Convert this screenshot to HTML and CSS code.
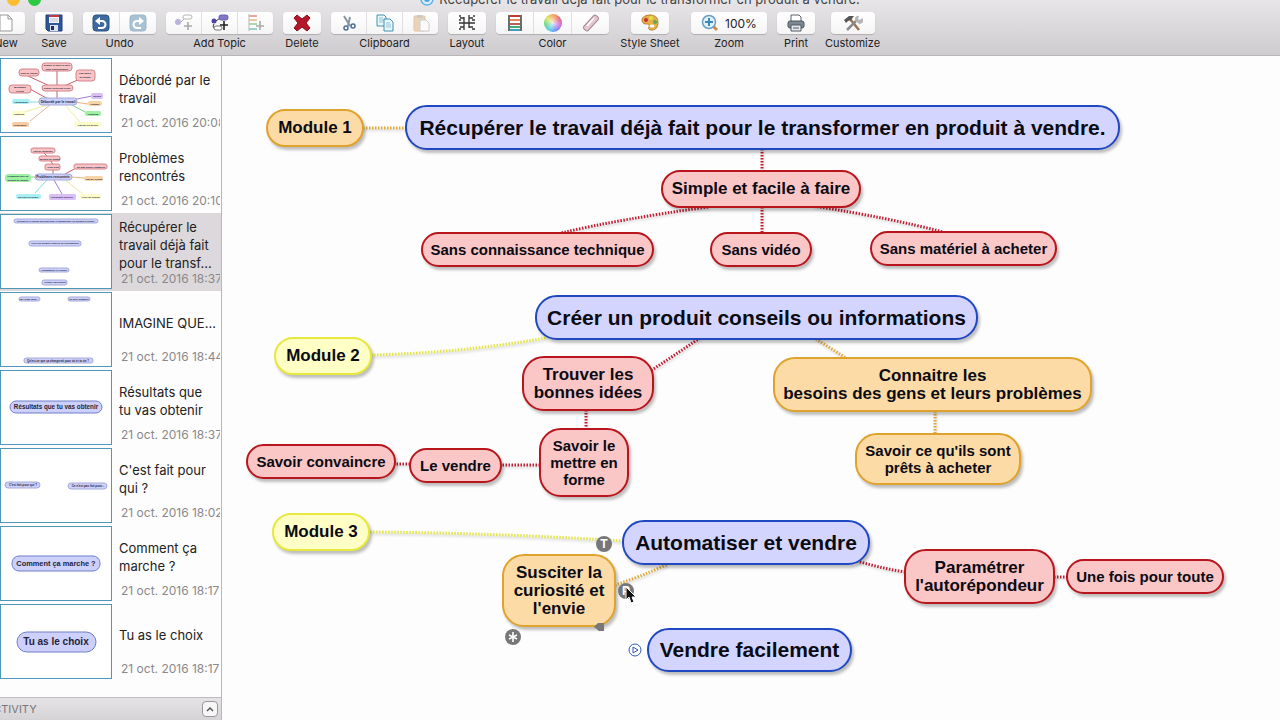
FILE: index.html
```html
<!DOCTYPE html>
<html lang="fr">
<head>
    <meta charset="UTF-8">
    <meta name="viewport" content="width=device-width, initial-scale=1.0">
    <title>Récupérer le travail déjà fait pour le transformer en produit à vendre.</title>
    <link rel="stylesheet" href="styles.css">
</head>
<body>
    <header class="window-header">
        <div class="titlebar">
            <div class="lights">
                <span class="light red"></span>
                <span class="light yellow"></span>
                <span class="light green"></span>
            </div>
            <svg class="doc-icon" width="14" height="14" viewBox="0 0 14 14"><circle cx="7" cy="7" r="6" fill="#d8eefc" stroke="#5fb3e6" stroke-width="1.5"/><circle cx="7" cy="7" r="3" fill="#4ba3e0"/></svg>
            <span>Récupérer le travail déjà fait pour le transformer en produit à vendre.</span>
        </div>

        <div class="toolbar">
            <div class="tool">
                <div class="group">
                    <button type="button" aria-label="New"><svg width="18" height="18" viewBox="0 0 18 18"><path d="M3 1h8l4 4v12H3z" fill="#fff" stroke="#999" stroke-width="1"/><path d="M11 1v4h4" fill="none" stroke="#999"/></svg></button>
                </div>
                <span class="label">New</span>
            </div>
            <div class="tool">
                <div class="group">
                    <button type="button" aria-label="Save"><svg width="18" height="18" viewBox="0 0 18 18"><path d="M1 1h16v16H3l-2-2z" fill="#2f569c" stroke="#1f3d78" stroke-width="1"/><rect x="4" y="1" width="10" height="8" fill="#f3f5fa"/><rect x="4" y="1" width="10" height="2" fill="#c23a43"/><path d="M5 5h8M5 7h8" stroke="#b9c2d6"/><rect x="5" y="11" width="8" height="6" fill="#dde3ee"/><rect x="6" y="12" width="3" height="4" fill="#1d2f58"/></svg></button>
                </div>
                <span class="label">Save</span>
            </div>
            <div class="tool">
                <div class="group group-two">
                    <button type="button" aria-label="Undo"><svg width="18" height="18" viewBox="0 0 18 18"><rect x="1" y="1" width="16" height="16" rx="3" fill="#3d699f" stroke="#2d5282"/><path d="M5 7h5a3 3 0 0 1 0 7H6" fill="none" stroke="#fff" stroke-width="2"/><path d="M3 7l5-4v8z" fill="#fff"/></svg></button>
                    <button type="button" aria-label="Redo"><svg width="18" height="18" viewBox="0 0 18 18"><rect x="1" y="1" width="16" height="16" rx="3" fill="#a9c2d3" stroke="#9bb7c9"/><path d="M13 7H8a3 3 0 0 0 0 7h4" fill="none" stroke="#fff" stroke-width="2"/><path d="M15 7l-5-4v8z" fill="#fff"/></svg></button>
                </div>
                <span class="label">Undo</span>
            </div>
            <div class="tool">
                <div class="group group-three">
                    <button type="button" aria-label="Add topic"><svg width="18" height="18" viewBox="0 0 18 18"><circle cx="3" cy="8" r="3" fill="#b9b3d8"/><path d="M6 8l3-3" stroke="#aaa"/><rect x="8" y="1" width="9" height="4" rx="2" fill="#fff" stroke="#b5b5b5"/><path d="M13 8v8M9 12h8" stroke="#aaa" stroke-width="1.6"/></svg></button>
                    <button type="button" aria-label="Add subtopic"><svg width="18" height="18" viewBox="0 0 18 18"><circle cx="3" cy="7" r="2.5" fill="#4d45a5"/><path d="M5 7l4-3M3 10c-2 3 0 5 3 5" stroke="#333" fill="none"/><rect x="8" y="1" width="9" height="5" rx="2" fill="#8077c7" stroke="#6860b4"/><rect x="3" y="12" width="8" height="4" rx="2" fill="#fff" stroke="#777"/><path d="M13 7v9M9 11h8" stroke="#222" stroke-width="1.6"/></svg></button>
                    <button type="button" aria-label="Add multiple topics"><svg width="18" height="18" viewBox="0 0 18 18"><path d="M2 2h8" stroke="#e8a59a" stroke-width="2"/><path d="M2 6h8" stroke="#e8c9a0" stroke-width="2"/><path d="M2 10h8" stroke="#a9d9ae" stroke-width="2"/><path d="M2 15h8" stroke="#9bcfd0" stroke-width="2"/><path d="M2 0v17" stroke="#b9b9b9"/><path d="M13 7v9M9 12h8" stroke="#aaa" stroke-width="1.6"/></svg></button>
                </div>
                <span class="label">Add Topic</span>
            </div>
            <div class="tool">
                <div class="group">
                    <button type="button" aria-label="Delete"><svg width="18" height="18" viewBox="0 0 18 18"><path d="M4 1l5 4 5-4 3 3-4 5 4 5-3 3-5-4-5 4-3-3 4-5-4-5z" fill="#b5162a" stroke="#8c0f1f" stroke-width="1"/></svg></button>
                </div>
                <span class="label">Delete</span>
            </div>
            <div class="tool">
                <div class="group group-three">
                    <button type="button" aria-label="Cut"><svg width="18" height="18" viewBox="0 0 18 18"><path d="M4 2l6 10M10 3l-2 9" stroke="#8796a5" stroke-width="2"/><circle cx="6" cy="14" r="2" fill="none" stroke="#4a6f94" stroke-width="1.5"/><circle cx="13" cy="12" r="2" fill="none" stroke="#4a6f94" stroke-width="1.5"/></svg></button>
                    <button type="button" aria-label="Copy"><svg width="18" height="18" viewBox="0 0 18 18"><path d="M1 1h7l2 2v9H1z" fill="#eaf6fa" stroke="#3f92ab"/><path d="M3 4h4M3 6h5M3 8h4" stroke="#8fc3d2"/><path d="M8 5h6l3 3v9H8z" fill="#eaf6fa" stroke="#3f92ab"/><path d="M10 9h4M10 11h5M10 13h5" stroke="#8fc3d2"/></svg></button>
                    <button type="button" aria-label="Paste"><svg width="18" height="18" viewBox="0 0 18 18"><rect x="2" y="2" width="11" height="15" rx="1" fill="#ead3bb" stroke="#dec4a8"/><rect x="5" y="1" width="5" height="3" fill="#c9c9c9"/><path d="M8 6h6l3 3v8H8z" fill="#fafafa" stroke="#ccc"/></svg></button>
                </div>
                <span class="label">Clipboard</span>
            </div>
            <div class="tool">
                <div class="group">
                    <button type="button" aria-label="Layout"><svg width="18" height="18" viewBox="0 0 18 18"><path d="M6 3v13M11 1v13M1 9h16M2 4h4M2 13h4M11 4h4M11 13h4M1 2h2M1 6h2M15 2h2M14 6h3M1 15h2M14 15h3" stroke="#333" stroke-width="1.3" fill="none"/></svg></button>
                </div>
                <span class="label">Layout</span>
            </div>
            <div class="tool">
                <div class="group group-color">
                    <button type="button" aria-label="Color list"><svg width="18" height="18" viewBox="0 0 18 18"><path d="M4 2h10" stroke="#c0392b" stroke-width="2"/><path d="M4 6h10" stroke="#e08a5a" stroke-width="2"/><path d="M4 10h10" stroke="#b5625f" stroke-width="2"/><path d="M4 13h10" stroke="#40ae79" stroke-width="2"/><path d="M4 16h10" stroke="#409fc0" stroke-width="2"/><path d="M3 1v16M15 1v16" stroke="#222" stroke-width="1.3"/></svg></button>
                    <button type="button" aria-label="Color wheel"><span class="wheel"></span></button>
                    <button type="button" aria-label="Clear color"><svg width="18" height="18" viewBox="0 0 18 18"><rect x="6" y="0" width="6" height="18" rx="2" transform="rotate(42 9 9)" fill="#e8c5d2" stroke="#9b8790"/><path d="M5 12L12 4" stroke="#fff" stroke-width="1.5"/></svg></button>
                </div>
                <span class="label">Color</span>
            </div>
            <div class="tool tool-wide">
                <div class="group">
                    <button type="button" aria-label="Style Sheet"><svg width="18" height="18" viewBox="0 0 18 18"><path d="M1 6c0-3 4-5 8-5 5 0 8 3 8 7 0 5-2 8-6 8-3 0-4-1-3-3 1-3-1-3-3-3-3 0-4-2-4-4z" fill="#e5b04a" stroke="#b8802c"/><circle cx="5" cy="6" r="2" fill="#c4312e"/><circle cx="10" cy="4" r="2" fill="#e6df4d"/><circle cx="14" cy="8" r="2" fill="#63a954"/><ellipse cx="11" cy="12" rx="2.5" ry="1.5" fill="#fff"/></svg></button>
                </div>
                <span class="label">Style Sheet</span>
            </div>
            <div class="tool">
                <div class="group group-zoom">
                    <button type="button"><svg width="18" height="18" viewBox="0 0 18 18"><path d="M12 12l4 4" stroke="#cf8c45" stroke-width="3"/><circle cx="8" cy="8" r="6.5" fill="#e1f1fb" stroke="#6c9ec2" stroke-width="1.5"/><path d="M8 4v8M4 8h8" stroke="#3c87bd" stroke-width="2"/></svg>100%</button>
                </div>
                <span class="label">Zoom</span>
            </div>
            <div class="tool">
                <div class="group">
                    <button type="button" aria-label="Print"><svg width="18" height="18" viewBox="0 0 18 18"><path d="M4 7V1h8l2 2v4" fill="#fff" stroke="#59636c"/><rect x="1" y="7" width="16" height="7" rx="2" fill="#7c8893" stroke="#4d565e"/><path d="M4 11h10v6H4z" fill="#e6eaee" stroke="#4d565e"/><path d="M6 14h6" stroke="#4d565e"/></svg></button>
                </div>
                <span class="label">Print</span>
            </div>
            <div class="tool">
                <div class="group group-wide">
                    <button type="button" aria-label="Customize"><svg width="20" height="18" viewBox="0 0 20 18"><path d="M7 5l9 11" stroke="#9a7452" stroke-width="2.5"/><path d="M1 6l5-4h5L8 6l-3 1-2 2z" fill="#555"/><path d="M4 16l9-9" stroke="#8c8c8c" stroke-width="2.5"/><path d="M13 7a3 3 0 0 1 3-5l-1 3 2 1 2-2a3 3 0 0 1-4 5z" fill="#b5b5b5"/></svg></button>
                </div>
                <span class="label">Customize</span>
            </div>
        </div>
    </header>

    <div class="workspace">
        <aside class="sidebar">
            <ul class="sheets">
                <li class="sheet">
                    <svg class="thumb" viewBox="1 1 110 73">
                        <g fill="none" stroke="#c4606c">
                            <path d="M57 12v34M28 18l24 11M82 20L62 29M30 31l20 11"/>
                            <path d="M72 42l20-4" stroke="#a87ed0"/><path d="M74 44l14 2" stroke="#e3b577"/><path d="M70 46l17 9" stroke="#7ddc83"/><path d="M65 47l15 17" stroke="#efeb9c"/><path d="M42 44H30" stroke="#84d7e0"/><path d="M47 47L24 54" stroke="#efeb9c"/><path d="M50 47L30 63" stroke="#e3b99a"/>
                        </g>
                        <g class="t-red"><rect x="42" y="5" width="30" height="8" rx="3"/><rect x="19" y="11" width="20" height="7" rx="3"/><rect x="76" y="12" width="19" height="11" rx="3"/><rect x="9" y="27" width="22" height="8" rx="3"/><rect x="42" y="27" width="31" height="6" rx="3"/></g>
                        <rect class="t-blue" x="39" y="40" width="38" height="7" rx="3"/>
                        <rect x="91" y="35" width="12" height="6" rx="2" fill="#d9bdf5"/><rect x="88" y="43" width="14" height="5" rx="2" fill="#f7d5a9"/><rect x="85" y="53" width="16" height="5" rx="2" fill="#a0f0a3"/><rect x="74" y="64" width="28" height="5" rx="2" fill="#fdfbc9"/><rect x="12" y="41" width="18" height="5" rx="2" fill="#a9eff4"/><rect x="12" y="53" width="14" height="5" rx="2" fill="#fdfbc9"/><rect x="12" y="64" width="17" height="5" rx="2" fill="#f9cba2"/>
                        <g class="t-text" font-size="2.5"><text x="57" y="8">Simple et facile à faire</text><text x="57" y="12">sans connaissance</text><text x="29" y="16">Trop de travail</text><text x="85" y="16">Pas assez</text><text x="85" y="20">de temps</text><text x="20" y="30">Messages</text><text x="20" y="34">clients</text><text x="57" y="31">Travail récurrent client</text><text x="58" y="45" font-size="3.4">Débordé par le travail</text><text x="97" y="39">Stress</text><text x="95" y="47">Fatigue</text><text x="93" y="57">Planning</text><text x="88" y="68">Pas de vie privée</text><text x="21" y="45">Facturation</text><text x="19" y="57">Factures</text><text x="20" y="68">Problèmes</text></g>
                    </svg>
                    <div class="info"><a class="name" href="#">Débordé par le travail</a><span class="date">21 oct. 2016 20:08</span></div>
                </li>
                <li class="sheet">
                    <svg class="thumb" viewBox="1 1 110 73">
                        <g fill="none" stroke="#c4606c"><path d="M44 17l4 4M50 24l4 6M53 33v5M65 38l13-7"/><path d="M30 41h6" stroke="#7ddc83"/><path d="M70 41l14 1" stroke="#e3b577"/><path d="M47 44L35 57" stroke="#84d7e0"/><path d="M54 44l8 14" stroke="#a87ed0"/><path d="M65 44l18 14" stroke="#efeb9c"/></g>
                        <g class="t-red"><rect x="31" y="12" width="24" height="5" rx="2"/><rect x="39" y="20" width="21" height="5" rx="2"/><rect x="45" y="28" width="15" height="6" rx="2"/><rect x="74" y="28" width="33" height="5" rx="2"/></g>
                        <rect class="t-blue" x="35" y="38" width="37" height="6" rx="3"/>
                        <rect x="5" y="38" width="26" height="8" rx="3" fill="#a0f0a3"/><rect x="84" y="40" width="19" height="5" rx="2" fill="#f7d5a9"/><rect x="16" y="58" width="25" height="5" rx="2" fill="#a9eff4"/><rect x="49" y="58" width="27" height="6" rx="2" fill="#d9bdf5"/><rect x="80" y="58" width="21" height="5" rx="2" fill="#fdfbc9"/>
                        <g class="t-text" font-size="2.5"><text x="43" y="16">Pas de méthode</text><text x="50" y="24">Besoin de temps</text><text x="53" y="32">Trop long</text><text x="91" y="32">Ne pas savoir comment</text><text x="53" y="42" font-size="3.2">Problèmes rencontrés</text><text x="18" y="41">Comment faire un</text><text x="18" y="45">produit de qualité</text><text x="94" y="44">Pas de clients</text><text x="28" y="62" font-size="2">Pas d'idée de produit</text><text x="62" y="62">Technique difficile</text><text x="91" y="62">Peur de vendre</text></g>
                    </svg>
                    <div class="info"><a class="name" href="#">Problèmes rencontrés</a><span class="date">21 oct. 2016 20:10</span></div>
                </li>
                <li class="sheet selected">
                    <svg class="thumb" viewBox="1 1 110 73">
                        <g class="t-blue"><rect x="14" y="5" width="84" height="4" rx="2"/><rect x="29" y="27" width="52" height="5" rx="2"/><rect x="39" y="54" width="30" height="4" rx="2"/><rect x="42" y="66" width="25" height="5" rx="2"/></g>
                        <g class="t-text" font-size="2.5"><text x="56" y="8" font-size="2.4">Récupérer le travail déjà fait pour le transformer en produit à vendre.</text><text x="55" y="30" font-size="2.4">Créer un produit conseils ou informations</text><text x="54" y="57">Automatiser et vendre</text><text x="55" y="69">Vendre facilement</text></g>
                    </svg>
                    <div class="info"><a class="name" href="#">Récupérer le travail déjà fait pour le transf...</a><span class="date">21 oct. 2016 18:37</span></div>
                </li>
                <li class="sheet">
                    <svg class="thumb" viewBox="1 1 110 73">
                        <g class="t-blue"><rect x="19" y="5" width="21" height="4" rx="2"/><rect x="68" y="5" width="22" height="4" rx="2"/><rect x="24" y="66" width="69" height="5" rx="2"/></g>
                        <g class="t-text" font-size="2.5"><text x="29" y="8">IMAGINE QUE...</text><text x="79" y="8">Tu sois organisé</text><text x="58" y="70" font-size="2.8">Qu'est-ce que ça changerait pour toi et ta vie ?</text></g>
                    </svg>
                    <div class="info"><a class="name" href="#">IMAGINE QUE...</a><span class="date">21 oct. 2016 18:44</span></div>
                </li>
                <li class="sheet">
                    <svg class="thumb" viewBox="1 1 110 73">
                        <rect class="t-blue t-strong" x="10" y="31" width="92" height="12" rx="6"/>
                        <text class="t-text" x="56" y="39" font-size="6.3">Résultats que tu vas obtenir</text>
                    </svg>
                    <div class="info"><a class="name" href="#">Résultats que tu&nbsp;vas obtenir</a><span class="date">21 oct. 2016 18:37</span></div>
                </li>
                <li class="sheet">
                    <svg class="thumb" viewBox="1 1 110 73">
                        <g class="t-blue"><rect x="5" y="34" width="35" height="6" rx="3"/><rect x="68" y="35" width="39" height="6" rx="3"/></g>
                        <g class="t-text" font-size="3"><text x="23" y="38">C'est fait pour qui ?</text><text x="88" y="39">Ce n'est pas fait pour...</text></g>
                    </svg>
                    <div class="info"><a class="name" href="#">C'est fait pour qui ?</a><span class="date">21 oct. 2016 18:02</span></div>
                </li>
                <li class="sheet">
                    <svg class="thumb" viewBox="1 1 110 73">
                        <rect class="t-blue t-strong" x="12" y="30" width="88" height="15" rx="7"/>
                        <text class="t-text" x="56" y="40" font-size="7.4">Comment ça marche ?</text>
                    </svg>
                    <div class="info"><a class="name" href="#">Comment ça marche ?</a><span class="date">21 oct. 2016 18:17</span></div>
                </li>
                <li class="sheet">
                    <svg class="thumb" viewBox="1 1 110 73">
                        <rect class="t-blue t-strong" x="17" y="28" width="79" height="20" rx="10"/>
                        <text class="t-text" x="56" y="41" font-size="10">Tu as le choix</text>
                    </svg>
                    <div class="info"><a class="name" href="#">Tu as le choix</a><span class="date">21 oct. 2016 18:17</span></div>
                </li>
            </ul>
            <div class="activity">
                <span>ACTIVITY</span>
                <button type="button" aria-label="Show activity"><svg width="8" height="6" viewBox="0 0 8 6"><path d="M1 5l3-3 3 3" fill="none" stroke="#555" stroke-width="1.5"/></svg></button>
            </div>
        </aside>

        <main class="map">
            <svg class="links" width="1058" height="664" viewBox="222 56 1058 664">
                <g class="l-orange">
                    <path d="M363 128H406"/>
                    <path d="M816 339L846 358"/>
                    <path d="M935 411V434"/>
                    <path d="M615 585Q640 577 668 564"/>
                </g>
                <g class="l-red">
                    <path d="M762 149V171"/>
                    <path d="M708 207Q620 219 561 233"/>
                    <path d="M762 207V233"/>
                    <path d="M814 206Q890 218 943 232"/>
                    <path d="M700 338L652 370"/>
                    <path d="M586 410V429"/>
                    <path d="M540 465H501"/>
                    <path d="M410 464H395"/>
                    <path d="M857 561Q880 568 905 572"/>
                    <path d="M1054 577H1067"/>
                </g>
                <g class="l-yellow">
                    <path d="M371 355Q460 353 546 338"/>
                    <path d="M370 532Q500 533 623 541"/>
                </g>
            </svg>

            <div class="node orange module-1">Module 1</div>
            <div class="node blue recuperer">Récupérer le travail déjà fait pour le transformer en produit à vendre.</div>
            <div class="node red simple">Simple et facile à faire</div>
            <div class="node red small sans-technique">Sans connaissance technique</div>
            <div class="node red small sans-video">Sans vidéo</div>
            <div class="node red small sans-materiel">Sans matériel à acheter</div>

            <div class="node blue creer">Créer un produit conseils ou informations</div>
            <div class="node yellow module-2">Module 2</div>
            <div class="node red trouver">Trouver les<br>bonnes idées</div>
            <div class="node red small mettre-en-forme">Savoir le<br>mettre en<br>forme</div>
            <div class="node red small le-vendre">Le vendre</div>
            <div class="node red small convaincre">Savoir convaincre</div>
            <div class="node orange connaitre">Connaitre les<br>besoins des gens et leurs problèmes</div>
            <div class="node orange small acheter">Savoir ce qu'ils sont<br>prêts à acheter</div>

            <div class="node yellow module-3">Module 3</div>
            <div class="node blue automatiser">Automatiser et vendre</div>
            <div class="node orange susciter">Susciter la<br>curiosité et<br>l'envie</div>
            <div class="node red parametrer">Paramétrer<br>l'autorépondeur</div>
            <div class="node red small une-fois">Une fois pour toute</div>
            <div class="node blue facilement">Vendre facilement</div>

            <!-- handles shown around the selected topic -->
            <span class="handle handle-t">T</span>
            <span class="handle handle-p">P</span>
            <svg class="handle handle-star" viewBox="0 0 16 16"><path d="M8 3v10M4 6l8 4M12 6l-8 4" stroke="#fff" stroke-width="1.6"/></svg>
            <svg class="fold" width="10" height="10" viewBox="0 0 10 10"><path d="M10 1v8H5L0 5l4-4z" fill="#777"/></svg>
            <svg class="play" width="14" height="14" viewBox="0 0 14 14"><circle cx="7" cy="7" r="6" fill="#fff" stroke="#3558b5"/><path d="M5 4l5 3-5 3z" fill="#fff" stroke="#3558b5"/></svg>
            <svg class="cursor" width="12" height="18" viewBox="0 0 12 18"><path d="M1 1v13l3-3 2 6 3-1-2-5h4z" fill="#111" stroke="#fff"/></svg>
        </main>
    </div>
</body>
</html>
```
FILE: styles.css
```css
* {
    box-sizing: border-box;
}
body {
    margin: 0;
    height: 100vh;
    display: flex;
    flex-direction: column;
    overflow: hidden;
    font-family: Inter, "Liberation Sans", sans-serif;
    color: #222;
    background: #fdfdfd;
}
button {
    font: inherit;
    color: inherit;
    cursor: pointer;
}

/* window header */
.window-header {
    flex: none;
    background: linear-gradient(#e8e5e8, #cfccd0);
    border-bottom: 1px solid #b9b6b9;
    overflow: hidden;
}
.titlebar {
    position: relative;
    display: flex;
    align-items: center;
    justify-content: center;
    gap: 5px;
    height: 22px;
    margin-top: -12px;
    font-size: 13px;
    line-height: 16px;
    color: #444;
}
.lights {
    position: absolute;
    left: -14px;
    display: flex;
    gap: 8px;
}
.light {
    width: 13px;
    height: 13px;
    border-radius: 50%;
}
.light.red { background: #fc5b57; }
.light.yellow { background: #fdbc32; }
.light.green { background: #2fc943; }

.toolbar {
    display: flex;
    gap: 10px;
    height: 45px;
    margin-left: -13px;
    padding-top: 2px;
}
.tool {
    display: flex;
    flex-direction: column;
    align-items: center;
}
.tool-wide {
    width: 62px;
}
.group {
    display: flex;
    width: 38px;
    height: 22px;
    background: linear-gradient(#ffffff, #f6f5f6);
    border-radius: 4px;
    box-shadow: 0 1px 1px #b0adb0;
}
.group-two { width: 73px; }
.group-three { width: 107px; }
.group-color { width: 113px; }
.group-zoom { width: 76px; }
.group-wide { width: 44px; }
.group button {
    flex: 1;
    display: flex;
    align-items: center;
    justify-content: center;
    gap: 6px;
    padding: 0;
    border: none;
    background: none;
    font-size: 12px;
}
.group button + button {
    border-left: 1px solid #e0dee0;
}
.label {
    margin-top: 1px;
    font-size: 11px;
    line-height: 16px;
    white-space: nowrap;
}
.wheel {
    width: 18px;
    height: 18px;
    border-radius: 50%;
    background: radial-gradient(#ffffffcc, #ffffff00 70%), conic-gradient(#f4a14c, #e55d6a, #d25fe0, #6d7ff0, #4fc6ee, #57d67c, #d9e35a, #f4a14c);
}

/* sheet list */
.workspace {
    flex: 1;
    display: flex;
    min-height: 0;
}
.sidebar {
    flex: none;
    width: 222px;
    display: flex;
    flex-direction: column;
    border-right: 1px solid #b9b7b9;
}
.sheets {
    flex: 1;
    margin: 0;
    padding: 1px 0 0;
    list-style: none;
    overflow: hidden;
}
.sheet {
    display: flex;
    gap: 7px;
    height: 78px;
    padding-top: 1px;
}
.sheet.selected {
    background: #dcd8dc;
}
.thumb {
    flex: none;
    box-sizing: content-box;
    width: 110px;
    height: 73px;
    background: #fff;
    border: 1px solid #4f97b8;
}
.t-blue {
    fill: #cdd0fa;
    stroke: #a5abd8;
    stroke-width: 1;
}
.t-strong {
    stroke: #6f7fc8;
}
.t-red {
    fill: #f8c4c6;
    stroke: #d4848b;
    stroke-width: 1;
}
.t-text {
    font-family: "Liberation Sans", sans-serif;
    font-weight: bold;
    text-anchor: middle;
    fill: #23243c;
}
.info {
    flex: 1;
    min-width: 0;
    padding-top: 4px;
}
.name {
    display: flex;
    align-items: center;
    height: 54px;
    font-size: 13px;
    line-height: 18px;
    color: #222;
    text-decoration: none;
}
.date {
    display: block;
    margin: 0 1px 0 2px;
    font-size: 12px;
    line-height: 14px;
    color: #8a888a;
    white-space: nowrap;
    overflow: hidden;
}
.activity {
    flex: none;
    display: flex;
    align-items: center;
    justify-content: space-between;
    height: 23px;
    margin-left: -14px;
    padding: 0 3px 0 0;
    background: linear-gradient(#e6e3e6, #d6d3d6);
    border-top: 1px solid #bdbbbd;
    font-size: 11px;
    color: #777;
}
.activity button {
    display: flex;
    align-items: center;
    justify-content: center;
    width: 16px;
    height: 16px;
    padding: 0;
    background: #f7f6f7;
    border: 1px solid #999;
    border-radius: 4px;
}

/* mind map */
.map {
    position: relative;
    flex: 1;
    overflow: hidden;
    font-family: "Liberation Sans", Arial, sans-serif;
    font-weight: bold;
    color: #0b0b14;
}
.links {
    position: absolute;
    left: 0;
    top: 0;
    fill: none;
    stroke-width: 3;
    stroke-dasharray: 1.5 1.5;
    filter: drop-shadow(1px 2px 1px #00000030);
}
.l-orange { stroke: #dfa93a; }
.l-red { stroke: #c01f35; }
.l-yellow { stroke: #e4e545; }

.node {
    position: absolute;
    display: flex;
    align-items: center;
    justify-content: center;
    text-align: center;
    white-space: nowrap;
    font-size: 17px;
    line-height: 18px;
    border: 2px solid;
    border-radius: 22px;
    box-shadow: 2px 3px 3px #00000040;
}
.node.small {
    font-size: 15px;
    line-height: 17px;
}
.node.blue {
    font-size: 21px;
    line-height: 24px;
    background: #d3d5ff;
    border-color: #2048c0;
}
.node.red {
    background: #fac6c6;
    border-color: #b9151d;
}
.node.orange {
    background: #fcdba6;
    border-color: #dfa22c;
}
.node.yellow {
    background: #ffffc6;
    border-color: #e6e83c;
}

.module-1 { left: 44px; top: 53px; width: 98px; height: 38px; }
.recuperer { left: 183px; top: 49px; width: 715px; height: 45px; }
.simple { left: 439px; top: 114px; width: 200px; height: 38px; }
.sans-technique { left: 199px; top: 176px; width: 233px; height: 35px; }
.sans-video { left: 488px; top: 176px; width: 102px; height: 35px; }
.sans-materiel { left: 648px; top: 175px; width: 187px; height: 35px; }

.creer { left: 313px; top: 239px; width: 443px; height: 45px; }
.module-2 { left: 52px; top: 281px; width: 98px; height: 38px; }
.trouver { left: 300px; top: 300px; width: 132px; height: 55px; }
.mettre-en-forme { left: 317px; top: 372px; width: 90px; height: 69px; }
.le-vendre { left: 187px; top: 392px; width: 93px; height: 35px; }
.convaincre { left: 24px; top: 388px; width: 150px; height: 35px; }
.connaitre { left: 551px; top: 301px; width: 319px; height: 55px; }
.acheter { left: 633px; top: 377px; width: 166px; height: 52px; }

.module-3 { left: 50px; top: 457px; width: 98px; height: 38px; }
.automatiser { left: 400px; top: 464px; width: 248px; height: 45px; }
.susciter { left: 280px; top: 498px; width: 114px; height: 73px; }
.parametrer { left: 682px; top: 493px; width: 151px; height: 55px; }
.une-fois { left: 844px; top: 503px; width: 158px; height: 35px; }
.facilement { left: 425px; top: 572px; width: 205px; height: 44px; }

.handle {
    position: absolute;
    width: 16px;
    height: 16px;
    border-radius: 50%;
    background: #777;
    color: #fff;
    font-size: 12px;
    line-height: 16px;
    text-align: center;
}
.handle-t { left: 374px; top: 480px; }
.handle-p { left: 396px; top: 527px; }
.handle-star { left: 283px; top: 573px; }
.fold { position: absolute; left: 372px; top: 566px; }
.play { position: absolute; left: 406px; top: 587px; }
.cursor { position: absolute; left: 403px; top: 530px; }
```
